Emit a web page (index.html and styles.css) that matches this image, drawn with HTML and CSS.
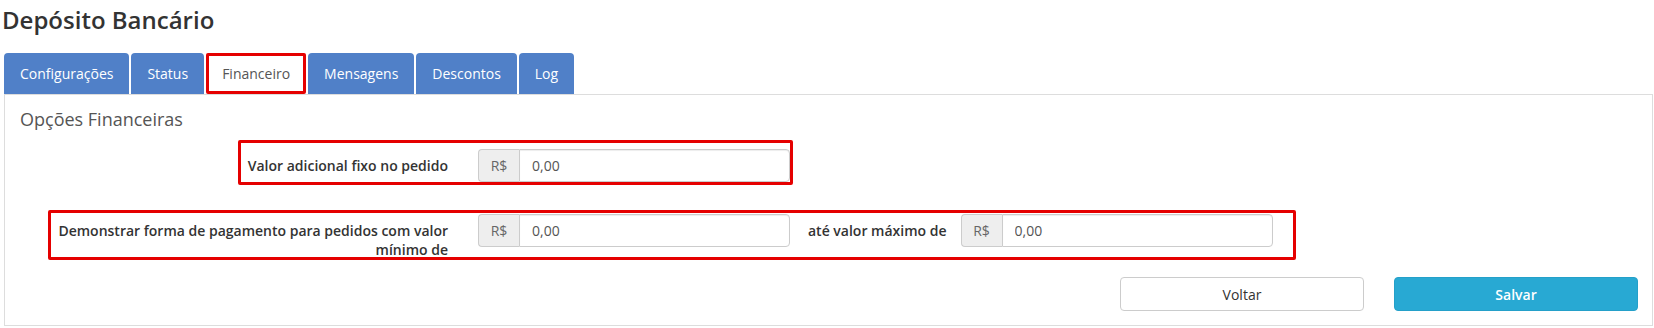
FILE: index.html
```html
<!DOCTYPE html>
<html lang="pt-BR">

<head>
    <meta name="viewport" content="width=device-width, initial-scale=1.0" />
    <title>Depósito Bancário</title>
    <link rel="stylesheet" href="styles.css">
</head>

<body>
    <div class="page">
        <h1 class="title">Depósito Bancário</h1>

        <ul class="tabs">
            <li class="tab">Configurações</li>
            <li class="tab">Status</li>
            <li class="tab active">Financeiro</li>
            <li class="tab">Mensagens</li>
            <li class="tab">Descontos</li>
            <li class="tab">Log</li>
        </ul>

        <div class="panel">
            <h4 class="panel-title">Opções Financeiras</h4>

            <div class="form-row first">
                <label class="label-col">Valor adicional fixo no pedido</label>
                <div class="input-col">
                    <div class="input-group">
                        <span class="addon">R$</span>
                        <input class="field" type="text" value="0,00">
                    </div>
                </div>
            </div>

            <div class="form-row">
                <label class="label-col">Demonstrar forma de pagamento para pedidos com valor mínimo de</label>
                <div class="input-col">
                    <div class="input-group">
                        <span class="addon">R$</span>
                        <input class="field" type="text" value="0,00">
                    </div>
                </div>
                <label class="inline-label">até valor máximo de</label>
                <div class="input-group">
                    <span class="addon">R$</span>
                    <input class="field" type="text" value="0,00">
                </div>
            </div>

            <div class="actions">
                <button class="btn btn-default">Voltar</button>
                <button class="btn btn-info">Salvar</button>
            </div>

            <!-- annotation boxes -->
            <div class="mark mark-one"></div>
            <div class="mark mark-two"></div>
        </div>
    </div>
</body>

</html>
```

FILE: styles.css
```css
* {
    padding: 0;
    margin: 0;
    box-sizing: border-box;
    font-family: "Open Sans", sans-serif;
}

body {
    background-color: #ffffff;
    color: #333;
}

.page {
    padding: 0 1px 0 4px;
}

.title {
    font-size: 24px;
    font-weight: 600;
    line-height: 33px;
    padding-top: 3px;
    margin-left: -2px;
    margin-bottom: 17px;
    color: #333;
}

.tabs {
    list-style: none;
    display: flex;
    gap: 2px;
}

.tab {
    height: 41px;
    line-height: 41px;
    padding: 0 16px;
    font-size: 14px;
    color: #ffffff;
    background-color: #5080c8;
    border-radius: 4px 4px 0 0;
}

.tab.active {
    background-color: #ffffff;
    color: #555;
    border: 3px solid #e50000;
    border-radius: 2px;
    line-height: 35px;
    padding: 0 13px;
}

.panel {
    position: relative;
    border: 1px solid #dddddd;
    padding: 12px 0 14px 0;
}

.panel-title {
    font-size: 18px;
    font-weight: 400;
    line-height: 24px;
    color: #555;
    padding-left: 15px;
    margin-bottom: 18px;
}

.form-row {
    display: flex;
    align-items: flex-start;
}

.form-row.first {
    margin-bottom: 32px;
}

.label-col {
    width: 458px;
    flex-shrink: 0;
    padding: 7px 15px 0 15px;
    text-align: right;
    font-size: 14px;
    font-weight: 600;
    line-height: 19px;
    color: #333;
}

.input-col {
    width: 342px;
    flex-shrink: 0;
    padding: 0 15px;
}

.inline-label {
    padding: 7px 14px 0 3px;
    font-size: 14px;
    font-weight: 600;
    line-height: 19px;
    color: #333;
}

.input-group {
    display: flex;
    width: 312px;
    height: 33px;
}

.addon {
    width: 41px;
    flex-shrink: 0;
    display: flex;
    align-items: center;
    justify-content: center;
    font-size: 14px;
    color: #666;
    background-color: #eeeeee;
    border: 1px solid #cccccc;
    border-right: none;
    border-radius: 4px 0 0 4px;
}

.field {
    flex: 1;
    min-width: 0;
    height: 33px;
    padding: 0 12px;
    font-size: 14px;
    color: #555;
    border: 1px solid #cccccc;
    border-radius: 0 4px 4px 0;
    box-shadow: inset 0 1px 1px rgba(0, 0, 0, 0.075);
}

.actions {
    display: flex;
    justify-content: flex-end;
    gap: 30px;
    padding-right: 14px;
    margin-top: 18px;
}

.btn {
    width: 244px;
    height: 34px;
    font-size: 14px;
    border-radius: 4px;
    cursor: pointer;
}

.btn-default {
    background-color: #ffffff;
    color: #333;
    border: 1px solid #cccccc;
}

.btn-info {
    background-color: #28a9d3;
    color: #ffffff;
    font-weight: 600;
    border: 1px solid #24a0c9;
}

.mark {
    position: absolute;
    border: 3px solid #e50000;
    border-radius: 2px;
}

.mark-one {
    left: 233px;
    top: 45px;
    width: 555px;
    height: 45px;
}

.mark-two {
    left: 43px;
    top: 115px;
    width: 1248px;
    height: 50px;
}
```
